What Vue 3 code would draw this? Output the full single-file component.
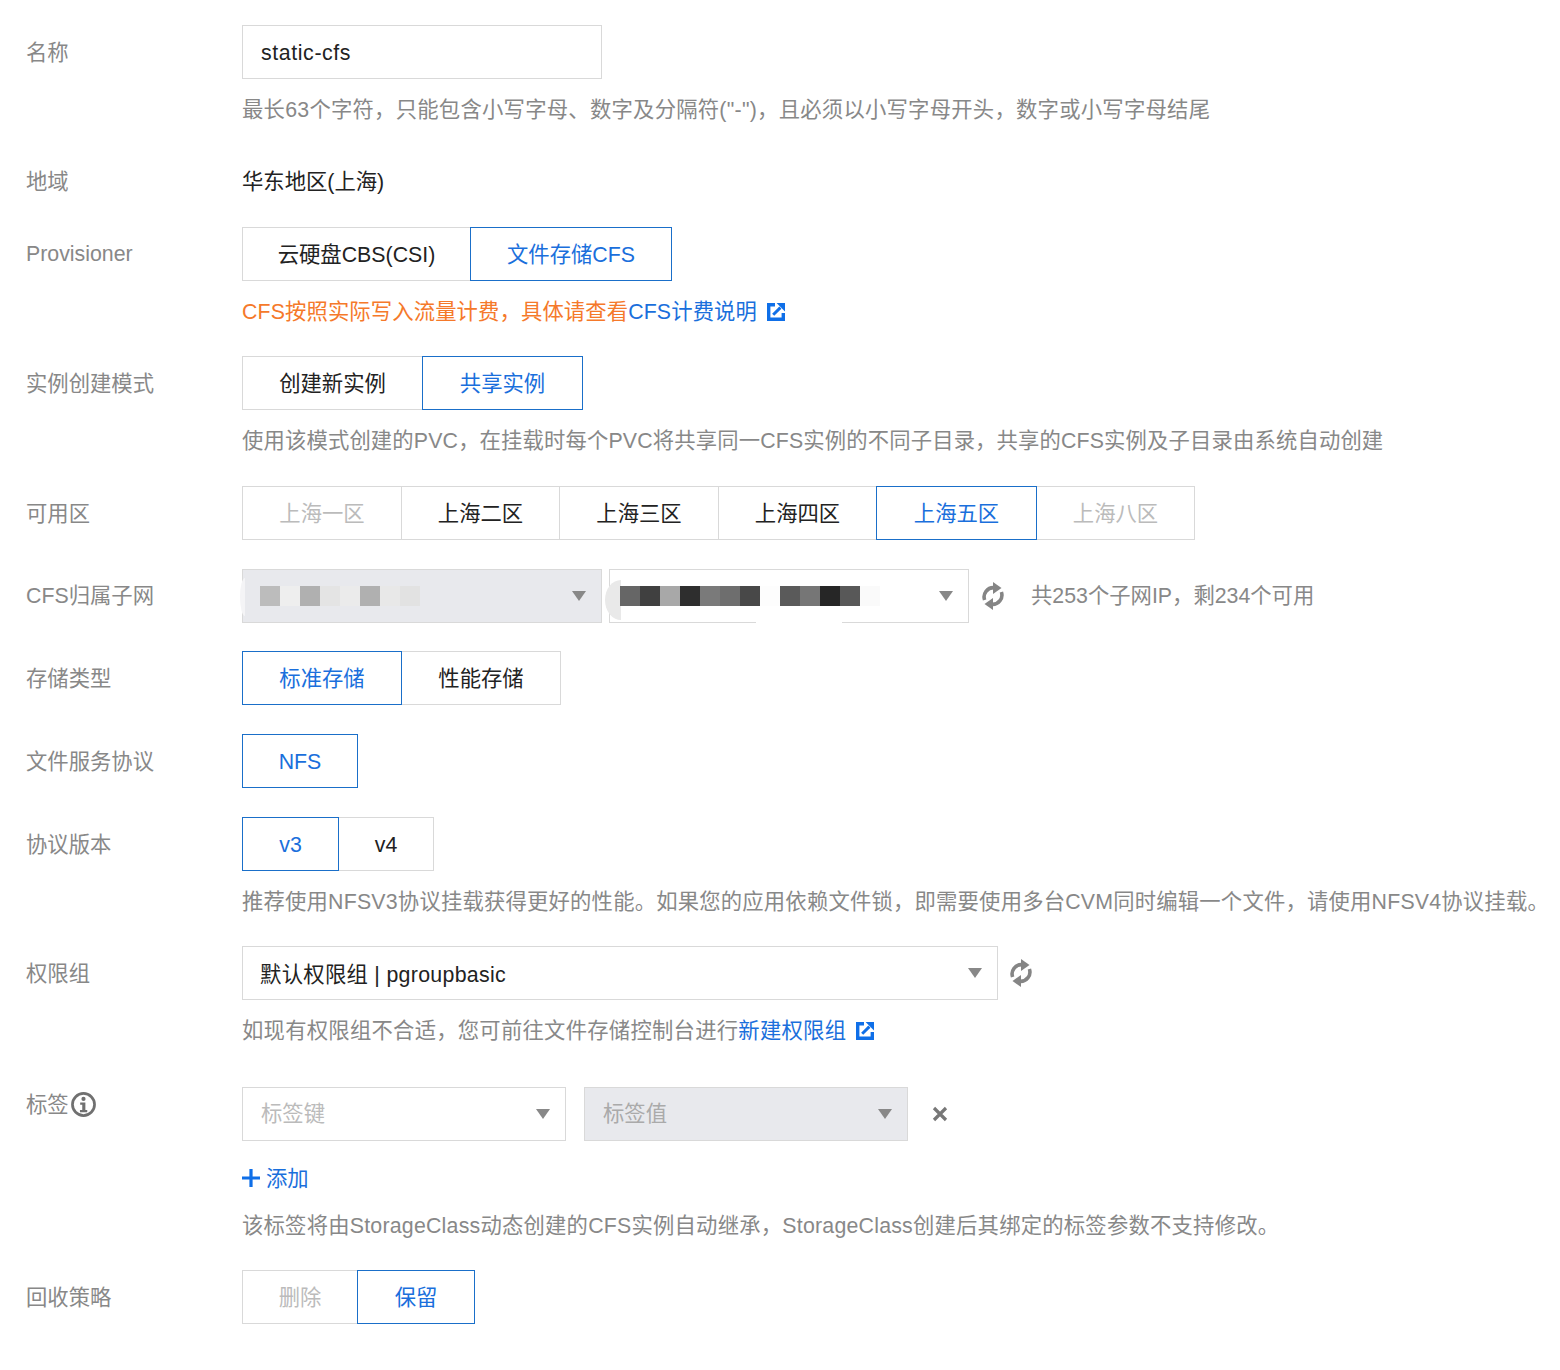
<script setup>
const provisioner = [
  { t: '云硬盘CBS(CSI)', w: 229 },
  { t: '文件存储CFS', w: 202, on: true },
]
const mode = [
  { t: '创建新实例', w: 181 },
  { t: '共享实例', w: 161, on: true },
]
const zones = [
  { t: '上海一区', w: 160, off: true },
  { t: '上海二区', w: 159 },
  { t: '上海三区', w: 160 },
  { t: '上海四区', w: 159 },
  { t: '上海五区', w: 161, on: true },
  { t: '上海八区', w: 159, off: true },
]
const storage = [
  { t: '标准存储', w: 160, on: true },
  { t: '性能存储', w: 160 },
]
const proto = [{ t: 'NFS', w: 116, on: true }]
const version = [
  { t: 'v3', w: 97, on: true },
  { t: 'v4', w: 96 },
]
const reclaim = [
  { t: '删除', w: 116, off: true },
  { t: '保留', w: 118, on: true },
]
const mosaicA = ['#bcbcbc', '#eeeeee', '#b0b0b0', '#e4e4e4', '#ebebeb', '#b0b0b0', '#e8e8e8', '#e2e2e2']
const mosaicB = ['#666', '#404040', '#a8a8a8', '#2e2e2e', '#7a7a7a', '#6e6e6e', '#484848', '#fdfdfd', '#5a5a5a', '#767676', '#262626', '#585858', '#fafafa']
const seg = (b) => ({ width: b.w + 'px' })
</script>

<template>
  <div class="page">
    <div class="row gap">
      <div class="label">名称</div>
      <div class="body">
        <div class="field name">static-cfs</div>
        <div class="hint ls1">最长63个字符，只能包含小写字母、数字及分隔符("-")，且必须以小写字母开头，数字或小写字母结尾</div>
      </div>
    </div>

    <div class="row region">
      <div class="label flat">地域</div>
      <div class="body plain">华东地区(上海)</div>
    </div>

    <div class="row gap">
      <div class="label flat">Provisioner</div>
      <div class="body">
        <div class="segs">
          <div v-for="b in provisioner" :key="b.t" class="seg" :class="{ on: b.on, off: b.off }" :style="seg(b)">{{ b.t }}</div>
        </div>
        <div class="hint orange ls3">CFS按照实际写入流量计费，具体请查看<span class="link">CFS计费说明</span>
          <svg class="ext" viewBox="0 0 18 18"><path d="M8 1.7H1.7v14.6h14.6V10" fill="none" stroke="#0f6fe8" stroke-width="3.4"/><path d="M6.2 11.8 13.4 4.6" fill="none" stroke="#0f6fe8" stroke-width="3"/><path d="M9.6 0H18v8.4z" fill="#0f6fe8"/></svg>
        </div>
      </div>
    </div>

    <div class="row gap">
      <div class="label">实例创建模式</div>
      <div class="body">
        <div class="segs">
          <div v-for="b in mode" :key="b.t" class="seg" :class="{ on: b.on, off: b.off }" :style="seg(b)">{{ b.t }}</div>
        </div>
        <div class="hint ls2">使用该模式创建的PVC，在挂载时每个PVC将共享同一CFS实例的不同子目录，共享的CFS实例及子目录由系统自动创建</div>
      </div>
    </div>

    <div class="row gap zone-row">
      <div class="label">可用区</div>
      <div class="body">
        <div class="segs">
          <div v-for="b in zones" :key="b.t" class="seg" :class="{ on: b.on, off: b.off }" :style="seg(b)">{{ b.t }}</div>
        </div>
      </div>
    </div>

    <div class="row gap subnet-row">
      <div class="label flat">CFS归属子网</div>
      <div class="body inline">
        <div class="field sel w360 disabled">
          <span class="edge"></span>
          <span class="mosaic first"><i v-for="(c, i) in mosaicA" :key="i" :style="{ background: c }"></i></span>
          <span class="caret"></span>
        </div>
        <div class="field sel w360 second">
          <span class="blob"></span>
          <span class="smudge"></span>
          <span class="mosaic"><i v-for="(c, i) in mosaicB" :key="i" :style="{ background: c }"></i></span>
          <span class="caret"></span>
        </div>
        <svg class="refresh r1" viewBox="0 0 24 28"><path d="M3.6 18A9.4 9.4 0 0 1 13 5.6" fill="none" stroke="#858585" stroke-width="3.6"/><path d="M12 0 20.5 6 12 12z" fill="#858585"/><path d="M20.4 10A9.4 9.4 0 0 1 11 22.4" fill="none" stroke="#858585" stroke-width="3.6"/><path d="M12 28 3.5 22 12 16z" fill="#858585"/></svg>
        <span class="count">共253个子网IP，剩234个可用</span>
      </div>
    </div>

    <div class="row gap">
      <div class="label">存储类型</div>
      <div class="body">
        <div class="segs">
          <div v-for="b in storage" :key="b.t" class="seg" :class="{ on: b.on, off: b.off }" :style="seg(b)">{{ b.t }}</div>
        </div>
      </div>
    </div>

    <div class="row gap">
      <div class="label">文件服务协议</div>
      <div class="body">
        <div class="segs">
          <div v-for="b in proto" :key="b.t" class="seg" :class="{ on: b.on, off: b.off }" :style="seg(b)">{{ b.t }}</div>
        </div>
      </div>
    </div>

    <div class="row gap">
      <div class="label">协议版本</div>
      <div class="body">
        <div class="segs">
          <div v-for="b in version" :key="b.t" class="seg" :class="{ on: b.on, off: b.off }" :style="seg(b)">{{ b.t }}</div>
        </div>
        <div class="hint ls4">推荐使用NFSV3协议挂载获得更好的性能。如果您的应用依赖文件锁，即需要使用多台CVM同时编辑一个文件，请使用NFSV4协议挂载。</div>
      </div>
    </div>

    <div class="row wide-gap">
      <div class="label">权限组</div>
      <div class="body">
        <div class="inline">
          <div class="field sel w756"><span class="val">默认权限组 | pgroupbasic</span><span class="caret"></span></div>
          <svg class="refresh r2" viewBox="0 0 24 28"><path d="M3.6 18A9.4 9.4 0 0 1 13 5.6" fill="none" stroke="#858585" stroke-width="3.6"/><path d="M12 0 20.5 6 12 12z" fill="#858585"/><path d="M20.4 10A9.4 9.4 0 0 1 11 22.4" fill="none" stroke="#858585" stroke-width="3.6"/><path d="M12 28 3.5 22 12 16z" fill="#858585"/></svg>
        </div>
        <div class="hint ls1">如现有权限组不合适，您可前往文件存储控制台进行<span class="link">新建权限组</span>
          <svg class="ext" viewBox="0 0 18 18"><path d="M8 1.7H1.7v14.6h14.6V10" fill="none" stroke="#0f6fe8" stroke-width="3.4"/><path d="M6.2 11.8 13.4 4.6" fill="none" stroke="#0f6fe8" stroke-width="3"/><path d="M9.6 0H18v8.4z" fill="#0f6fe8"/></svg>
        </div>
      </div>
    </div>

    <div class="row gap">
      <div class="label tag-label">标签<svg class="info" viewBox="0 0 24 24"><circle cx="12" cy="12" r="10.6" fill="none" stroke="#707070" stroke-width="2.6"/><circle cx="12" cy="6.6" r="2" fill="#707070"/><path d="M8.8 10h5v7.2h1.8v2.2H8.6v-2.2h2.2v-5H8.8z" fill="#707070"/></svg></div>
      <div class="body">
        <div class="inline tags">
          <div class="field sel w324"><span class="ph">标签键</span><span class="caret"></span></div>
          <div class="field sel w324 disabled tag-val"><span class="ph dim">标签值</span><span class="caret"></span></div>
          <svg class="close" viewBox="0 0 16 16"><path d="M2 2l12 12M14 2 2 14" fill="none" stroke="#777" stroke-width="3.2"/></svg>
        </div>
        <div class="add">
          <svg class="plus" viewBox="0 0 18 18"><path d="M9 0v18M0 9h18" fill="none" stroke="#0f6fe8" stroke-width="3.2"/></svg>
          <span class="link">添加</span>
        </div>
        <div class="hint add-hint ls5">该标签将由StorageClass动态创建的CFS实例自动继承，StorageClass创建后其绑定的标签参数不支持修改。</div>
      </div>
    </div>

    <div class="row">
      <div class="label">回收策略</div>
      <div class="body">
        <div class="segs">
          <div v-for="b in reclaim" :key="b.t" class="seg" :class="{ on: b.on, off: b.off }" :style="seg(b)">{{ b.t }}</div>
        </div>
      </div>
    </div>
  </div>
</template>

<style>
html, body { margin: 0; background: #fff; }
</style>

<style scoped>
.page {
  width: 1560px;
  height: 1370px;
  box-sizing: border-box;
  padding: 25px 0 0 26px;
  overflow: hidden;
  font-family: "Liberation Sans", "Noto Sans CJK SC", sans-serif;
  font-size: 21.33px;
  color: #222;
  background: #fff;
}
.row { display: flex; align-items: flex-start; }
.gap { margin-bottom: 28.75px; }
.zone-row { margin-bottom: 29.25px; }
.subnet-row { margin-bottom: 28.25px; }
.wide-gap { margin-bottom: 40px; }
.region { height: 43px; margin-bottom: 29px; }
.label {
  width: 216px;
  flex: none;
  height: 54px;
  line-height: 56px;
  color: #888;
  white-space: nowrap;
}
.label.flat { line-height: 54px; }
.body { flex: 1; min-width: 0; }
.plain { line-height: 54px; height: 54px; }
.inline { display: flex; align-items: center; }
.field {
  box-sizing: border-box;
  height: 54px;
  border: 1px solid #d9d9d9;
  padding: 0 18px;
  line-height: 54px;
  background: #fff;
  white-space: nowrap;
  letter-spacing: .6px;
}
.name { width: 360px; }
.sel {
  display: flex;
  align-items: center;
  justify-content: space-between;
  padding-right: 15px;
  flex: none;
  letter-spacing: 0;
  position: relative;
}
.w360 { width: 360px; }
.w756 { width: 756px; }
.w324 { width: 324px; }
.second { margin-left: 7px; }
.tag-val { margin-left: 18px; }
.disabled { background: #e8e9ed; }
.val { letter-spacing: .3px; margin-top: 3px; margin-left: -1px; }
.caret {
  width: 0;
  height: 0;
  border-left: 7.5px solid transparent;
  border-right: 7.5px solid transparent;
  border-top: 10px solid #888;
  flex: none;
}
.mosaic { display: flex; height: 20px; position: relative; }
.mosaic.first { margin-left: -1px; }
.mosaic i { display: block; width: 20px; height: 20px; flex: none; }
.second .mosaic { margin-left: -8px; }
.blob {
  position: absolute;
  left: -5px;
  top: 10px;
  width: 16px;
  height: 40px;
  background: #e9e9e9;
  border-radius: 100% 0 0 100% / 50% 0 0 50%;
}
.smudge {
  position: absolute;
  left: 146px;
  bottom: -2px;
  width: 86px;
  height: 3px;
  background: #fff;
}
.edge {
  position: absolute;
  left: -3px;
  top: 8px;
  width: 5px;
  height: 38px;
  background: #f4f4f6;
  border-radius: 100% 0 0 100% / 50% 0 0 50%;
}
.refresh { width: 24px; height: 28px; flex: none; }
.r1 { margin-left: 12px; }
.r2 { margin-left: 11px; }
.count { margin-left: 26px; color: #888; white-space: nowrap; line-height: 32px; }
.hint {
  margin-top: 15.25px;
  margin-bottom: -.5px;
  height: 32px;
  line-height: 32px;
  color: #888;
  white-space: nowrap;
  display: flex;
  align-items: center;
}
.ls1 { letter-spacing: .25px; }
.ls2 { letter-spacing: .15px; }
.ls3 { letter-spacing: .12px; }
.ls4 { letter-spacing: .2px; }
.ls5 { letter-spacing: .22px; }
.orange { color: #f5792a; }
.link { color: #1a6fdc; }
.ext { width: 18px; height: 18px; margin-left: 10px; flex: none; }
.segs { display: flex; height: 54px; }
.seg {
  box-sizing: border-box;
  height: 54px;
  line-height: 54px;
  text-align: center;
  border: 1px solid #d9d9d9;
  margin-right: -1px;
  background: #fff;
  color: #222;
  white-space: nowrap;
  flex: none;
}
.seg.on { border-color: #1a6fc9; color: #1a6fdc; z-index: 1; }
.seg.off { color: #bbb; }
.tag-label { height: 36px; line-height: 36px; display: flex; align-items: center; }
.info { width: 25px; height: 25px; margin-left: 2px; flex: none; }
.ph { color: #bbb; }
.ph.dim { color: #aaa; }
.close { width: 16px; height: 16px; margin-left: 24px; flex: none; }
.add { display: flex; align-items: center; margin-top: 20px; height: 32px; }
.plus { width: 18px; height: 18px; margin: 2px 6px 0 0; flex: none; }
.add-hint { margin-top: 17px; margin-bottom: -1px; }
</style>
